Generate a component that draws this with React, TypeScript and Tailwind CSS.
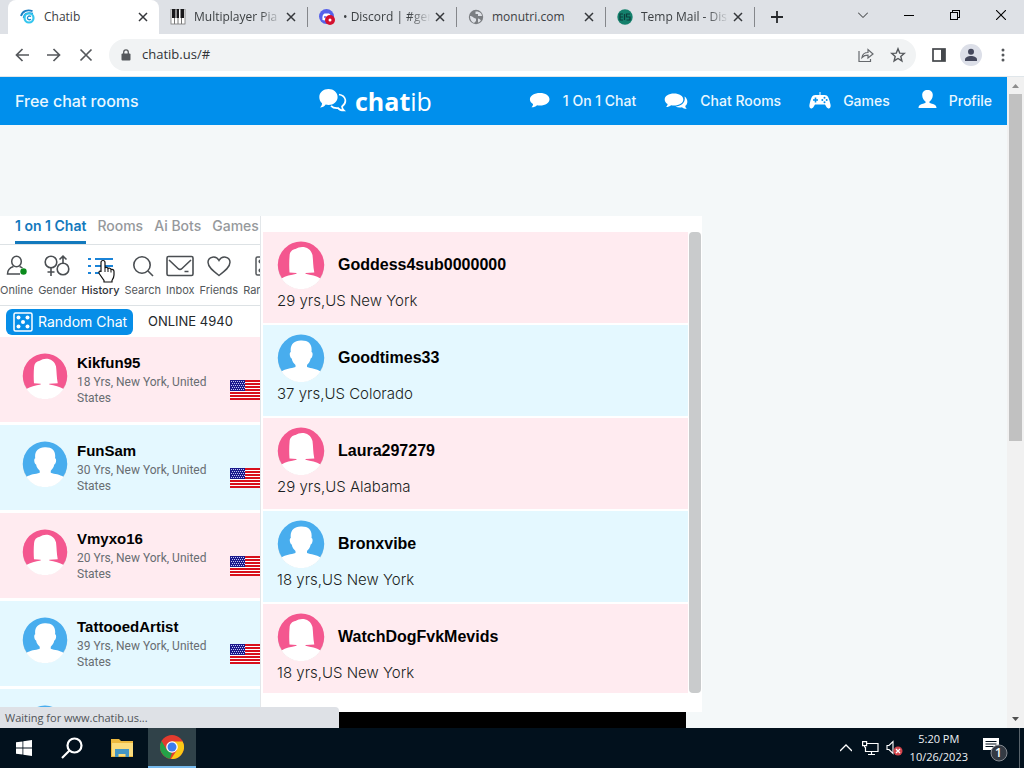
import type { ReactNode } from 'react';

type Gender = 'f' | 'm';

const people = [
  { name: 'Kikfun95', meta: '18 Yrs, New York, United States', gender: 'f' as Gender },
  { name: 'FunSam', meta: '30 Yrs, New York, United States', gender: 'm' as Gender },
  { name: 'Vmyxo16', meta: '20 Yrs, New York, United States', gender: 'f' as Gender },
  { name: 'TattooedArtist', meta: '39 Yrs, New York, United States', gender: 'm' as Gender },
  { name: '', meta: '', gender: 'm' as Gender },
];

const visited = [
  { name: 'Goddess4sub0000000', meta: '29 yrs,US New York', gender: 'f' as Gender },
  { name: 'Goodtimes33', meta: '37 yrs,US Colorado', gender: 'm' as Gender },
  { name: 'Laura297279', meta: '29 yrs,US Alabama', gender: 'f' as Gender },
  { name: 'Bronxvibe', meta: '18 yrs,US New York', gender: 'm' as Gender },
  { name: 'WatchDogFvkMevids', meta: '18 yrs,US New York', gender: 'f' as Gender },
];

function Avatar({ gender, className }: { gender: Gender; className: string }) {
  return (
    <svg viewBox="0 0 48 48" className={className} aria-hidden="true">
      <circle cx="24" cy="24.800" r="23.200" fill="#000" opacity="0.13" />
      <circle cx="24" cy="23.800" r="23.200" fill={gender === 'f' ? '#f4578f' : '#48adee'} />
      {gender === 'f' ? (
        <path
          fill="#fff"
          d="M12.500 31.500C12 25 12.200 19 12.600 14.500C12.800 11 15 8.500 18.500 8C24 4 33.500 5.500 35.500 14C36.200 19 36 25 37.300 31.500L28.500 32V32.800C34 34 39.500 35 43.500 37.500A23.200 23.200 0 0 1 4.500 37.500C8.500 35 14 34 19.500 32.800V32Z"
        />
      ) : (
        <path
          fill="#fff"
          d="M23.500 6.500C31.500 6 35.500 10 34.500 18C36.500 18.500 35.500 24 33.700 24.500C33 28 31.500 29.500 30 31V33C34 34.500 39.500 34.500 43.500 37.500A23.200 23.200 0 0 1 4.500 37.500C8.500 34.500 14 34.500 18.500 33V31C17 29.500 15.300 28 14.700 24.500C12.700 24 12 18.500 13.800 18C12.800 10.500 17 6.800 23.500 6.500Z"
        />
      )}
    </svg>
  );
}

function Flag() {
  const dots = [];
  for (let y = 0; y < 5; y++) for (let x = 0; x < 7; x++) dots.push([x * 2 + (y % 2 ? 1 : 0), y * 2]);
  return (
    <svg viewBox="0 0 30 20" className="block h-5 w-[30px] shrink-0" shapeRendering="crispEdges" role="img" aria-label="United States">
      <rect width="30" height="20" fill="#fff" />
      {[0, 3, 6, 9, 12, 15, 18].map((y) => (
        <rect key={y} y={y} width="30" height="2" fill="#d8101c" />
      ))}
      <rect width="15" height="11" fill="#1b1a8c" />
      {dots.map(([x, y]) => (
        <rect key={`${x}-${y}`} x={x + 1} y={y + 1} width="1" height="1" fill="#c3c5f5" />
      ))}
    </svg>
  );
}

function CloseIcon() {
  return (
    <svg viewBox="0 0 10 10" className="h-2.5 w-2.5" stroke="#35373b" strokeWidth="1.500">
      <path d="M1 1l8 8M9 1l-8 8" />
    </svg>
  );
}

function Tab({ icon, title, active = false, fade = false }: { icon: ReactNode; title: string; active?: boolean; fade?: boolean }) {
  return (
    <div
      className={
        active
          ? 'flex h-[34px] w-[151px] shrink-0 items-center rounded-t-lg bg-white pr-[11px] pl-3'
          : 'relative flex h-[34px] w-[149px] shrink-0 items-center pr-3 pl-[11px] after:absolute after:right-0 after:h-5 after:w-px after:bg-[#85878b]'
      }
    >
      <span className="flex h-4 w-4 shrink-0 items-center justify-center">{icon}</span>
      <button
        className={
          fade
            ? 'ml-2 min-w-0 flex-1 overflow-hidden text-left whitespace-nowrap text-[#3c4043] [mask-image:linear-gradient(to_right,black_75%,transparent)]'
            : 'ml-2 min-w-0 flex-1 overflow-hidden text-left whitespace-nowrap text-[#3c4043]'
        }
      >
        {title}
      </button>
      <button aria-label="Close tab" className="ml-1 shrink-0">
        <CloseIcon />
      </button>
    </div>
  );
}

function BrowserTabs() {
  return (
    <div className="flex h-[34px] shrink-0 items-center bg-[#dee1e6] pl-2">
      <Tab
        active
        title="Chatib"
        icon={
          <svg viewBox="0 0 16 16" className="h-4 w-4" fill="none">
            <path d="M1 7C2.500 1.500 8 .5 12.500 2.200" stroke="#1a7fc4" strokeWidth="1.800" />
            <path d="M3.500 9C4 4.500 8 3 13 4.500" stroke="#1298dd" strokeWidth="1.500" />
            <circle cx="9" cy="9" r="4.500" stroke="#35c6ee" strokeWidth="2.200" />
            <path d="M11 7.500C8.500 6 6.500 8.500 8 10.200C9 11 10.200 10.800 11 10.200" stroke="#1b8fd0" strokeWidth="1.300" />
          </svg>
        }
      />
      <Tab
        fade
        title="Multiplayer Pia"
        icon={
          <svg viewBox="0 0 16 16" className="h-4 w-4">
            <rect x="1" width="14" height="15" fill="#fff" stroke="#777" strokeWidth=".8" />
            <path d="M4.500 9v6M8 9v6M11.500 9v6" stroke="#777" />
            <path d="M2 0h3.500v9H2zM6.500 0H9v9H6.500zM10.500 0H14v9h-3.500z" fill="#18181b" />
          </svg>
        }
      />
      <Tab
        fade
        title="• Discord | #gen"
        icon={
          <svg viewBox="0 0 16 16" className="h-4 w-4">
            <circle cx="7.500" cy="7.500" r="7.500" fill="#5661ea" />
            <path d="M3.500 11C3 7 4 5 5.500 4.500h4.500C11.500 5 12 7 12 9l-6 2.500z" fill="#fff" />
            <circle cx="6" cy="8" r="1" fill="#5661ea" />
            <circle cx="11" cy="11" r="5" fill="#d4112f" />
            <circle cx="11" cy="11" r="1.500" fill="#fff" />
          </svg>
        }
      />
      <Tab
        title="monutri.com"
        icon={
          <svg viewBox="0 0 16 16" className="h-4 w-4">
            <circle cx="8" cy="8" r="7.200" fill="#7b7e82" />
            <path d="M2 7C5 7 5.500 9.500 8 9.500V12L6 14C3.500 13 2 10.500 2 7ZM7.500 2.500V5H10V7h4C14 4.500 11.500 2 7.500 2.500ZM10 9.500c2 0 1.500 1.500 3 1.500-.8 1.500-1.800 2.200-3 2.500z" fill="#dee1e6" />
          </svg>
        }
      />
      <Tab
        fade
        title="Temp Mail - Dis"
        icon={
          <svg viewBox="0 0 16 16" className="h-4 w-4" fill="none">
            <circle cx="8" cy="8" r="7.700" fill="#14806c" />
            <path d="M6 5H3v6h3M3 8h3M7.500 5v6M13 5h-3.500v3H13v3H9.500" stroke="#0b3f3c" strokeWidth="1.200" />
          </svg>
        }
      />
      <button aria-label="New tab" className="ml-4">
        <svg viewBox="0 0 12 12" className="h-3 w-3" stroke="#26282b" strokeWidth="1.800">
          <path d="M6 0v12M0 6h12" />
        </svg>
      </button>
      <div className="mr-[18px] mb-1 ml-auto flex items-center gap-9">
        <button aria-label="Search tabs">
          <svg viewBox="0 0 10 10" className="h-2.5 w-2.5" fill="none" stroke="#26282b">
            <path d="M0 2.500l5 5 5-5" />
          </svg>
        </button>
        <button aria-label="Minimize">
          <svg viewBox="0 0 10 10" className="h-2.5 w-2.5" stroke="#000">
            <path d="M0 5.500h10" />
          </svg>
        </button>
        <button aria-label="Restore">
          <svg viewBox="0 0 10 10" className="h-2.5 w-2.5" fill="none" stroke="#000" shapeRendering="crispEdges">
            <path d="M.5 2.500h7v7h-7zM2.500 2.500v-2h7v7h-2" />
          </svg>
        </button>
        <button aria-label="Close">
          <svg viewBox="0 0 10 10" className="h-2.5 w-2.5" stroke="#000" strokeWidth="1.100">
            <path d="M0 0l10 10M10 0L0 10" />
          </svg>
        </button>
      </div>
    </div>
  );
}

function AddressBar() {
  return (
    <div className="flex h-[43px] shrink-0 items-center border-b border-[#e0e6ea] bg-white pr-[18px] pl-[15px]">
      <div className="flex w-[94px] shrink-0 items-center gap-[18px]">
        <button aria-label="Back">
          <svg viewBox="0 0 14 14" className="h-3.5 w-3.5" fill="none" stroke="#55585c" strokeWidth="1.700">
            <path d="M14 7H1.500M7.500 1L1.500 7l6 6" />
          </svg>
        </button>
        <button aria-label="Forward">
          <svg viewBox="0 0 14 14" className="h-3.5 w-3.5" fill="none" stroke="#55585c" strokeWidth="1.700">
            <path d="M0 7h12.500M6.500 1l6 6-6 6" />
          </svg>
        </button>
        <button aria-label="Stop loading">
          <svg viewBox="0 0 14 14" className="h-3.5 w-3.5" stroke="#55585c" strokeWidth="1.700">
            <path d="M1.500 1.500l11 11M12.500 1.500l-11 11" />
          </svg>
        </button>
      </div>
      <div className="flex h-8 min-w-0 flex-1 items-center rounded-full bg-[#f1f3f4] pr-2.5 pl-3">
        <svg viewBox="0 0 10 12" className="h-3 w-2.5 shrink-0">
          <rect x=".5" y="4.500" width="9" height="7" rx="1" fill="#55585c" />
          <path d="M2.700 5V3.200a2.300 2.300 0 0 1 4.600 0V5" fill="none" stroke="#55585c" strokeWidth="1.300" />
        </svg>
        <input aria-label="Address" defaultValue="chatib.us/#" className="ml-[11px] min-w-0 flex-1 bg-transparent text-[13px] text-[#303236] outline-none" />
        <button aria-label="Share" className="mr-4">
          <svg viewBox="0 0 16 16" className="h-4 w-4" fill="none" stroke="#66696d" strokeWidth="1.200">
            <path d="M1 4v10.500h11.500V12M4 10.500C4.500 7 7 5.500 10 5.500V2.500L15 7l-5 4V8.200C7.500 8.200 5.500 9 4 10.500z" />
          </svg>
        </button>
        <button aria-label="Bookmark this tab">
          <svg viewBox="0 0 16 16" className="h-4 w-4" fill="none" stroke="#55585c" strokeWidth="1.400">
            <path d="M8 1.800l1.700 4.300 4.600.3-3.500 3 1.100 4.500L8 11.500l-3.900 2.400 1.100-4.500-3.500-3 4.600-.3z" />
          </svg>
        </button>
      </div>
      <div className="ml-4 flex items-center">
        <button aria-label="Side panel">
          <svg viewBox="0 0 14 14" className="h-3.5 w-3.5">
            <rect x="1" y="1" width="12" height="12" fill="none" stroke="#44474b" strokeWidth="1.700" />
            <rect x="9" y="1" width="4" height="12" fill="#44474b" />
          </svg>
        </button>
        <button aria-label="Profile" className="ml-3.5">
          <svg viewBox="0 0 22 22" className="h-[22px] w-[22px]">
            <circle cx="11" cy="11" r="11" fill="#dcdfe8" />
            <circle cx="11" cy="7.700" r="3" fill="#44485c" />
            <path d="M5 17v-1.500c0-2.300 3-3.500 6-3.500s6 1.200 6 3.500V17z" fill="#44485c" />
          </svg>
        </button>
        <button aria-label="Menu" className="ml-[18px]">
          <svg viewBox="0 0 6 14" className="h-3.5 w-1.5" fill="#55585c">
            <circle cx="3" cy="2" r="1.500" />
            <circle cx="3" cy="7" r="1.500" />
            <circle cx="3" cy="12" r="1.500" />
          </svg>
        </button>
      </div>
    </div>
  );
}

function NavLink({ icon, label }: { icon: ReactNode; label: string }) {
  return (
    <a href="#" className="flex items-center gap-3 whitespace-nowrap">
      {icon}
      {label}
    </a>
  );
}

function SiteHeader() {
  return (
    <header className="flex h-12 items-center bg-[#008fec] px-[15px] font-['Inter',sans-serif] text-sm font-medium text-[#eaf7ff]">
      <a href="#" className="w-[304px] text-base whitespace-nowrap">
        Free chat rooms
      </a>
      <a href="#" className="flex items-center gap-2 font-['Open_Sans',sans-serif] text-[25px] leading-8 text-white">
        <svg viewBox="0 0 28 26" className="h-[26px] w-7">
          <path d="M20 6.500c7 1 8.500 8 3 12 0 2 1 3 2 4-3 0-5-1-6-2.500-3 .3-5.500-.6-7-2.200" fill="none" stroke="#fff" strokeWidth="1.700" />
          <path d="M9.500 1C14.500 1 18.600 4.300 18.600 9s-4.100 8-9.100 8c-1 0-1.900-.1-2.800-.4C5.500 18.500 3.500 19.500 1 19.500c1.500-1.300 2-2.700 2-4.300C1.200 13.700.3 11.500.3 9 .3 4.300 4.500 1 9.500 1z" fill="#fff" />
        </svg>
        <span>
          <b className="font-bold">chat</b>
          <span className="font-normal">ib</span>
        </span>
      </a>
      <nav className="ml-auto flex items-center gap-7">
        <NavLink
          label="1 On 1 Chat"
          icon={
            <svg viewBox="0 0 22 18" className="h-[18px] w-[22px]" fill="#fff">
              <path d="M11 1c5.500 0 9.500 2.600 9.500 6.200S16.500 13.500 11 13.500c-1 0-2-.1-3-.3-1.500 1.500-3.500 2.100-5.500 2 1-1 1.500-2 1.500-3.300C2 10.800.9 9.200.9 7.200.9 3.600 5.500 1 11 1z" />
            </svg>
          }
        />
        <NavLink
          label="Chat Rooms"
          icon={
            <svg viewBox="0 0 24 18" className="h-[18px] w-6" fill="#fff">
              <path d="M10 1.500c5.300 0 9.300 2.500 9.300 6s-4 6-9.300 6c-1 0-2-.1-2.900-.3-1.300 1.200-3 1.800-5 1.800.9-.9 1.500-1.800 1.500-3C1.700 11 .7 9.400.7 7.500c0-3.500 4-6 9.300-6z" />
              <path d="M20.500 4.500c4 2.700 3.300 7.800.8 9.300 0 1.300.6 2.200 1.500 3.200-2 0-3.700-.6-4.800-1.700-2.500.4-4.800.1-6.500-.9 6-.3 10.500-4.200 9-9.900z" />
            </svg>
          }
        />
        <NavLink
          label="Games"
          icon={
            <svg viewBox="0 0 22 20" className="h-5 w-[22px]">
              <path d="M10.500 4V1h1v3h4.200C19 4 20 7 21.500 13.500c.8 4.500-2.300 5-4 2.500l-1.500-2.500H6L4.500 16C2.800 18.500-.3 18 .5 13.500 2 7 3 4 6.300 4z" fill="#fff" />
              <path d="M6.500 6.500v5M4 9h5" stroke="#008fec" strokeWidth="1.600" />
              <g fill="#008fec">
                <circle cx="15.500" cy="6.800" r="1" />
                <circle cx="15.500" cy="11.200" r="1" />
                <circle cx="13.300" cy="9" r="1" />
                <circle cx="17.700" cy="9" r="1" />
              </g>
            </svg>
          }
        />
        <NavLink
          label="Profile"
          icon={
            <svg viewBox="0 0 19 22" className="h-[22px] w-[19px]" fill="#fff">
              <path d="M9.500 0c3.300 0 5.300 2 5.300 5s-1.700 5.700-3.300 6.500V13c3 .8 7 1.500 7 5H.5c0-3.500 4-4.200 7-5v-1.500C5.900 10.700 4.200 8 4.200 5s2-5 5.300-5z" />
            </svg>
          }
        />
      </nav>
    </header>
  );
}

function Tool({ icon, label, bold = false }: { icon: ReactNode; label: string; bold?: boolean }) {
  return (
    <button className={bold ? 'flex shrink-0 flex-col items-center font-medium text-[#2f3337]' : 'flex shrink-0 flex-col items-center'}>
      <span className="flex h-7 items-center">{icon}</span>
      <span className="mt-0.5 leading-4">{label}</span>
    </button>
  );
}

function HandCursor() {
  return (
    <svg viewBox="0 0 18 24" className="pointer-events-none absolute top-[43px] left-[98px] h-6 w-[18px]" aria-hidden="true">
      <path
        d="M5 1.500c1.300 0 2 .8 2 2V9c.5-1 2.500-.8 3 .5 1-.7 2.600-.3 3 1 1.300-.5 3 .2 3 2V16c0 2.500-1 4-2 5.500V23H6v-1.500L1.500 15c-.8-1.300-.7-2.800.5-3 .5 0 1 .5 1 1V3.500c0-1.200.7-2 2-2z"
        fill="#fff"
        stroke="#111"
        strokeWidth="1.200"
      />
      <path d="M7 9v4M10 10v3M13 11v2.500" stroke="#111" />
    </svg>
  );
}

function Dice({ className }: { className: string }) {
  return (
    <svg viewBox="0 0 20 20" className={className} fill="none" stroke="currentColor" strokeWidth="1.500">
      <rect x="1" y="1" width="18" height="18" rx="1.500" />
      <g fill="currentColor" stroke="none">
        <circle cx="5.500" cy="5.500" r="2" />
        <circle cx="14.500" cy="5.500" r="2" />
        <circle cx="10" cy="10" r="2" />
        <circle cx="5.500" cy="14.500" r="2" />
        <circle cx="14.500" cy="14.500" r="2" />
      </g>
    </svg>
  );
}

function Toolbar() {
  return (
    <div className="flex h-[61px] gap-[5px] overflow-hidden border-b border-[#dde2e5] pt-[7px] text-[11px] text-[#53575b]">
      <Tool
        label="Online"
        icon={
          <svg viewBox="0 0 22 22" className="h-[22px] w-[22px]" fill="none" stroke="#4a4e52" strokeWidth="1.500">
            <ellipse cx="10.500" cy="6.500" rx="4.800" ry="5.200" />
            <path d="M14 19H1.500c0-4 3-6.500 6-7.500M13.500 11.500c1 .3 2 .8 3 1.500" />
            <circle cx="17.500" cy="16.500" r="3.200" fill="#0a8a1c" stroke="none" />
          </svg>
        }
      />
      <Tool
        label="Gender"
        icon={
          <svg viewBox="0 0 26 22" className="h-[22px] w-[26px]" fill="none" stroke="#4a4e52" strokeWidth="1.600">
            <circle cx="7" cy="7" r="5.800" />
            <path d="M7 12.500V21M3.500 17h7" />
            <circle cx="19" cy="14" r="5.800" />
            <path d="M19 8V1.500M15.500 4.500L19 1.200l3.500 3.300" />
          </svg>
        }
      />
      <Tool
        bold
        label="History"
        icon={
          <svg viewBox="0 0 26 20" className="h-5 w-[26px]" stroke="#1b84d8" strokeWidth="2">
            <path d="M0 3h3M7 3h18M0 10h3M7 10h18M0 17h3M7 17h18" />
          </svg>
        }
      />
      <Tool
        label="Search"
        icon={
          <svg viewBox="0 0 22 22" className="h-[22px] w-[22px]" fill="none" stroke="#4a4e52" strokeWidth="1.600">
            <circle cx="10" cy="10" r="8.200" />
            <path d="M16 16l5 5" />
          </svg>
        }
      />
      <Tool
        label="Inbox"
        icon={
          <svg viewBox="0 0 28 22" className="h-[22px] w-7" fill="none" stroke="#4a4e52" strokeWidth="1.600">
            <rect x="1" y="1.500" width="26" height="19" rx="1.500" />
            <path d="M3 5l9 8.500c1.300 1.200 2.700 1.200 4 0L25 5M18.500 16.500h4" />
          </svg>
        }
      />
      <Tool
        label="Friends"
        icon={
          <svg viewBox="0 0 24 22" className="h-[22px] w-6" fill="none" stroke="#4a4e52" strokeWidth="1.500">
            <path d="M12 20.500C6 16 1 12 1 7.300 1 1.500 9 0 12 5.500 15 0 23 1.500 23 7.300 23 12 18 16 12 20.500z" />
          </svg>
        }
      />
      <Tool label="Random" icon={<Dice className="h-5 w-5" />} />
    </div>
  );
}

function Sidebar() {
  return (
    <aside className="relative h-[520px] w-[261px] shrink-0 overflow-hidden border-r border-[#e3e7ea] bg-white">
      <nav className="flex h-[29px] gap-[11px] overflow-hidden border-b border-[#dde2e5] pl-[15px] text-sm leading-5 font-medium whitespace-nowrap text-[#96999c]">
        <a href="#" className="h-7 border-b-3 border-[#1379bd] font-semibold text-[#1379bd]">
          1 on 1 Chat
        </a>
        <a href="#">Rooms</a>
        <a href="#">Ai Bots</a>
        <a href="#">Games</a>
      </nav>
      <Toolbar />
      <HandCursor />
      <div className="flex h-[31px] items-center pl-1.5">
        <button className="flex h-[26px] w-[127px] items-center gap-[5px] rounded-md bg-[#078ee8] pl-[7px] text-sm whitespace-nowrap text-white">
          <Dice className="h-5 w-5" />
          Random Chat
        </button>
        <span className="ml-[15px] text-[13px] text-[#24282b]">ONLINE 4940</span>
      </div>
      <ul className="flex flex-col gap-[3px]">
        {people.map((p, i) => (
          <li key={i} className={p.gender === 'f' ? 'flex h-[85px] bg-[#ffebf0] pt-4 pl-[22px]' : 'flex h-[85px] bg-[#e4f8ff] pt-4 pl-[22px]'}>
            <Avatar gender={p.gender} className="h-[46px] w-[46px] shrink-0" />
            {p.name && (
              <>
                <div className="ml-[9px] w-[147px] shrink-0">
                  <h3 className="font-['Liberation_Sans',sans-serif] text-[15px] leading-5 font-bold text-black">{p.name}</h3>
                  <p className="w-36 pt-px font-['Roboto',sans-serif] text-xs leading-4 text-[#686d72]">{p.meta}</p>
                </div>
                <div className="ml-1.5 pt-[27px]">
                  <Flag />
                </div>
              </>
            )}
          </li>
        ))}
      </ul>
    </aside>
  );
}

function HistoryPanel() {
  return (
    <section className="w-[441px] shrink-0">
      <div className="flex bg-white pt-4 pb-[19px] pl-0.5">
        <ul className="flex flex-1 flex-col gap-0.5">
          {visited.map((v) => (
            <li
              key={v.name}
              className={v.gender === 'f' ? 'bg-[#ffebf0] pt-[9px] pb-2.5 pl-3.5 last:pb-2' : 'bg-[#e4f8ff] pt-[9px] pb-2.5 pl-3.5'}
            >
              <div className="flex items-center gap-[13px]">
                <Avatar gender={v.gender} className="h-12 w-12" />
                <h3 className="font-['Liberation_Sans',sans-serif] text-base font-bold text-black">{v.name}</h3>
              </div>
              <p className="text-[15px] leading-6 font-light text-[#1b1f23]">{v.meta}</p>
            </li>
          ))}
        </ul>
        <div className="mr-px ml-px w-3 rounded-sm bg-[#c9cbcc]" />
      </div>
      <div className="mr-4 h-[90px] bg-black" />
    </section>
  );
}

function PageScrollbar() {
  return (
    <div className="flex w-[17px] shrink-0 flex-col items-center bg-[#f1f1f1]">
      <svg viewBox="0 0 17 17" className="h-[17px] w-[17px] shrink-0">
        <path d="M5 11l3.500-4 3.500 4z" fill="#8d8d8d" />
      </svg>
      <div className="h-[347px] w-[13px] bg-[#c1c1c1]" />
      <svg viewBox="0 0 17 17" className="mt-auto h-[17px] w-[17px] shrink-0">
        <path d="M5 6l3.500 4L12 6z" fill="#505050" />
      </svg>
    </div>
  );
}

function Taskbar() {
  return (
    <footer className="flex h-10 shrink-0 items-center bg-[#02111d] text-white">
      <button aria-label="Start" className="flex h-10 w-12 items-center justify-center">
        <svg viewBox="0 0 16 16" className="h-4 w-4" fill="#fff">
          <path d="M0 2.300l6.500-.9v6.200H0zM7.300 1.300L16 0v7.600H7.300zM0 8.400h6.500v6.200L0 13.700zM7.300 8.400H16V16l-8.700-1.300z" />
        </svg>
      </button>
      <button aria-label="Search" className="flex h-10 w-12 items-center justify-center">
        <svg viewBox="0 0 22 22" className="h-[22px] w-[22px]" fill="none" stroke="#fff" strokeWidth="2.200">
          <circle cx="13.500" cy="8.500" r="7" />
          <path d="M8.500 13.500L1 21" />
        </svg>
      </button>
      <button aria-label="File Explorer" className="flex h-10 w-[52px] items-center justify-center">
        <svg viewBox="0 0 22 20" className="h-5 w-[22px]">
          <path d="M0 1h8l2 2h12v16H0z" fill="#edb93f" />
          <path d="M1 5h21v13H1z" fill="#fbdc7d" />
          <path d="M4 19v-8h14v8h-3.500v-3h-7v3z" fill="#4496c4" />
        </svg>
      </button>
      <button aria-label="Chrome" className="flex h-10 w-12 items-center justify-center border-b-2 border-[#76b9ed] bg-[#304249]">
        <svg viewBox="0 0 24 24" className="h-6 w-6">
          <circle cx="12" cy="12" r="12" fill="#e33b2e" />
          <path d="M1.600 6L6.800 15 12 18l-2 5.800A12 12 0 0 1 1.600 6z" fill="#24a148" />
          <path d="M12 6.500h10.600A12 12 0 0 1 11 24l6-9z" fill="#fbc916" />
          <circle cx="12" cy="12" r="5.800" fill="#fff" />
          <circle cx="12" cy="12" r="4.500" fill="#3b7ded" />
        </svg>
      </button>
      <div className="ml-auto flex items-center">
        <svg viewBox="0 0 12 8" className="h-2 w-3" fill="none" stroke="#fff" strokeWidth="1.300">
          <path d="M0 7l6-6 6 6" />
        </svg>
        <svg viewBox="0 0 17 15" className="ml-2.5 h-[15px] w-[17px]" fill="none" stroke="#fff" strokeWidth="1.200">
          <path d="M5 2.500h11v8H3.500V6M6 13.500h7M9.500 10.500v3M.6.6h4v4h-4zM2.600 4.600v2" />
        </svg>
        <svg viewBox="0 0 17 16" className="ml-[7px] h-4 w-[17px]" fill="none">
          <path d="M1 5.500h2L7 1.500v12l-4-4H1z" stroke="#fff" strokeWidth="1.100" />
          <circle cx="12" cy="11" r="4.500" fill="#d3454c" />
          <path d="M10 9l4 4M14 9l-4 4" stroke="#fff" strokeWidth="1.300" />
        </svg>
        <div className="ml-[7px] text-center text-[11px] leading-[18px] text-[#eef2f5]">
          <div>5:20 PM</div>
          <div>10/26/2023</div>
        </div>
        <button aria-label="Notifications, 1 new" className="relative mr-[11px] ml-3.5">
          <svg viewBox="0 0 26 28" className="h-7 w-[26px]">
            <path d="M1 4h16v12h-4l-4 4v-4H1z" fill="#fff" />
            <path d="M3.500 7.500h11M3.500 10h11M3.500 12.500h8" stroke="#02111d" strokeWidth="1.100" />
            <circle cx="17" cy="19" r="8" fill="#343a43" stroke="#848990" />
          </svg>
          <span className="absolute bottom-0 left-[13px] leading-[18px] font-semibold">1</span>
        </button>
        <div className="mr-1 h-10 w-px bg-[#59636b]" />
      </div>
    </footer>
  );
}

export default function App() {
  return (
    <div className="flex h-screen flex-col overflow-hidden font-['Open_Sans',sans-serif] text-xs">
      <BrowserTabs />
      <AddressBar />
      <div className="relative flex min-h-0 flex-1">
        <div className="min-w-0 flex-1 overflow-hidden bg-[#f4f8f9]">
          <SiteHeader />
          <main className="flex pt-[91px] font-['Inter',sans-serif]">
            <Sidebar />
            <HistoryPanel />
          </main>
        </div>
        <PageScrollbar />
        <div className="absolute bottom-0 left-0 h-[21px] w-[339px] rounded-tr bg-[#dee1e6] pl-[5px] text-[11px] leading-[21px] text-[#505357]">
          Waiting for www.chatib.us...
        </div>
      </div>
      <Taskbar />
    </div>
  );
}
